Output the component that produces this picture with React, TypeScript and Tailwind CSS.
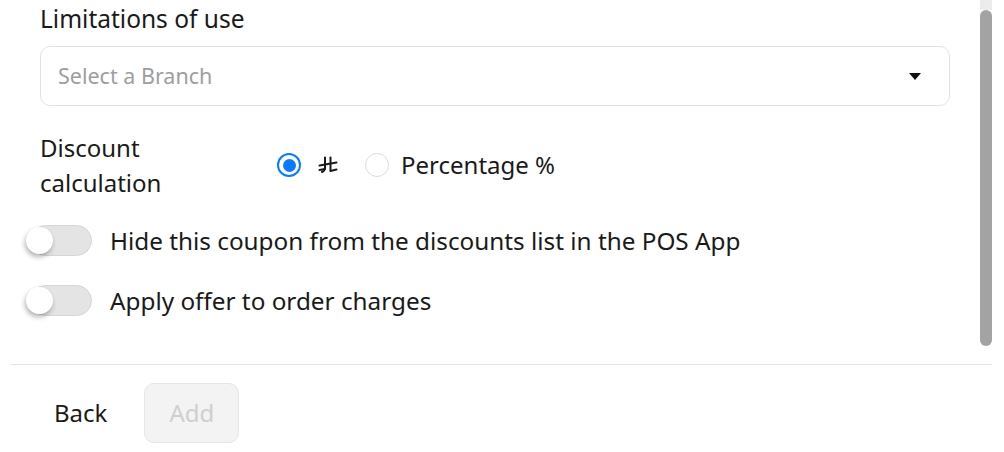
import React from "react";

const RiyalIcon: React.FC = () => (
  <svg width="20" height="18" viewBox="0 0 20 18" fill="none" stroke="#1a1a1a" strokeWidth="2" strokeLinecap="round">
    <path d="M7 1.5 V11.5 Q7 14.5 4 16" />
    <path d="M12.5 1.5 V14.5" />
    <path d="M1.5 9.5 L18.5 6.5" />
    <path d="M12.5 15 L18.5 13.5" />
    <path d="M1.5 14 L7 13" />
  </svg>
);

const Toggle: React.FC = () => (
  <div className="relative w-[66px] h-[32px] shrink-0">
    <div className="absolute left-[4px] top-0 w-[62px] h-[31px] rounded-full bg-[#e4e4e4] border border-[#d6d6d6]" />
    <div className="absolute left-0 top-[2px] w-[27px] h-[27px] rounded-full bg-white shadow-[-1px_3px_5px_rgba(0,0,0,0.3)]" />
  </div>
);

const App: React.FC = () => {
  return (
    <div
      className="w-[1004px] h-[452px] bg-white flex flex-col overflow-hidden text-[#1a1a1a]"
      style={{ fontFamily: '"Noto Sans", "Open Sans", sans-serif' }}
    >
      {/* SCROLL AREA */}
      <div className="h-[364px] flex">
        <div className="flex-1 pl-[40px] pr-[30px]">
          <p className="text-[24.5px] leading-[36px] mt-[1px]">Limitations of use</p>

          <div className="mt-[9px] h-[60px] rounded-[10px] border border-[#e3e3e3] flex items-center justify-between pl-[17px] pr-[28px]">
            <span className="text-[21.5px] text-[#9e9e9e]">Select a Branch</span>
            <svg width="12" height="7" viewBox="0 0 12 7">
              <path d="M0 0 H12 L6 7 Z" fill="#111" />
            </svg>
          </div>

          {/* DISCOUNT CALCULATION */}
          <div className="mt-[24px] flex items-center">
            <p className="w-[237px] text-[24px] leading-[35px]">
              Discount
              <br />
              calculation
            </p>
            <div className="flex items-center">
              <span className="w-[24px] h-[24px] rounded-full border-2 border-[#0a7aff] flex items-center justify-center">
                <span className="w-[13px] h-[13px] rounded-full bg-[#0a7aff]" />
              </span>
              <span className="ml-[17px]">
                <RiyalIcon />
              </span>
              <span className="ml-[27px] w-[24px] h-[24px] rounded-full border border-[#dcdcdc]" />
              <span className="ml-[12px] text-[24px]">Percentage %</span>
            </div>
          </div>

          {/* TOGGLES */}
          <div className="-ml-[14px] mt-[25px] flex flex-col gap-[28px]">
            <div className="flex items-center gap-[18px]">
              <Toggle />
              <span className="text-[24.3px] leading-[32px]">Hide this coupon from the discounts list in the POS App</span>
            </div>
            <div className="flex items-center gap-[18px]">
              <Toggle />
              <span className="text-[24.3px] leading-[32px]">Apply offer to order charges</span>
            </div>
          </div>
        </div>

        {/* SCROLLBAR */}
        <div className="w-[12px] mr-[12px] flex flex-col">
          <div className="h-[10px] bg-[#ececec]" />
          <div className="h-[336px] rounded-full bg-[#a3a3a3]" />
        </div>
      </div>

      {/* FOOTER */}
      <div className="ml-[10px] mr-[12px] border-t border-[#e5e5e5]" />
      <div className="flex items-center pl-[33px] pt-[18px]">
        <button className="px-[21px] h-[60px] text-[24px] text-[#1a1a1a]">Back</button>
        <button className="ml-[16px] w-[95px] h-[60px] rounded-[10px] bg-[#f3f3f3] border border-[#e6e6e6] text-[24px] text-[#cfcfcf]">
          Add
        </button>
      </div>
    </div>
  );
};

export default App;
